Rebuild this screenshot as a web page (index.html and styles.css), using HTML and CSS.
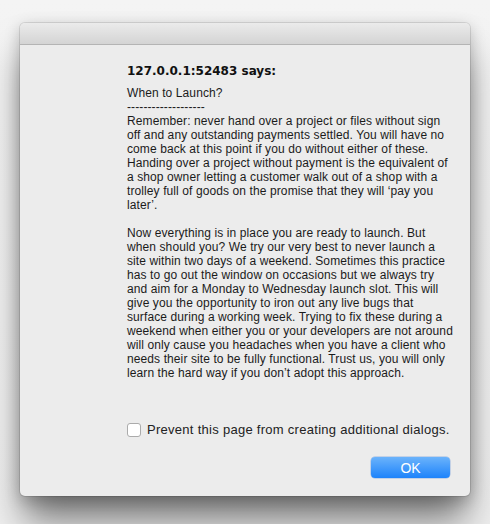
FILE: index.html
```html
<!DOCTYPE html>
<html>
<head>
<meta charset="utf-8">
<link rel="stylesheet" href="styles.css">
</head>
<body>
<div class="dialog">
  <div class="titlebar"></div>
  <div class="content">
    <div class="heading">127.0.0.1:52483 says:</div>
    <div class="message">When to Launch?
-------------------
Remember: never hand over a project or files without sign
off and any outstanding payments settled. You will have no
come back at this point if you do without either of these.
Handing over a project without payment is the equivalent of
a shop owner letting a customer walk out of a shop with a
trolley full of goods on the promise that they will ‘pay you
later’.

Now everything is in place you are ready to launch. But
when should you? We try our very best to never launch a
site within two days of a weekend. Sometimes this practice
has to go out the window on occasions but we always try
and aim for a Monday to Wednesday launch slot. This will
give you the opportunity to iron out any live bugs that
surface during a working week. Trying to fix these during a
weekend when either you or your developers are not around
will only cause you headaches when you have a client who
needs their site to be fully functional. Trust us, you will only
learn the hard way if you don’t adopt this approach.</div>
    <label class="prevent"><span class="box"></span><span class="prevent-text">Prevent this page from creating additional dialogs.</span></label>
    <div class="actions"><button class="ok">OK</button></div>
  </div>
</div>
</body>
</html>
```
FILE: styles.css
```css
html, body {
  margin: 0;
  padding: 0;
}
body {
  width: 490px;
  height: 524px;
  overflow: hidden;
  background: linear-gradient(#f4f4f4, #efefef);
  font-family: "Liberation Sans", Arial, sans-serif;
  color: #1b1b1b;
}
.dialog {
  margin: 23px 0 0 20px;
  width: 450px;
  height: 473px;
  background: #ececec;
  border-radius: 5px;
  box-shadow: 0 0 0 1px rgba(0,0,0,0.1), 0 28px 36px -4px rgba(0,0,0,0.5), 0 4px 16px rgba(0,0,0,0.22);
  display: flex;
  flex-direction: column;
  overflow: hidden;
}
.titlebar {
  height: 21px;
  flex: none;
  background: linear-gradient(#ebebeb, #d4d4d4);
  border-bottom: 1px solid #b4b4b4;
}
.content {
  flex: 1;
  display: flex;
  flex-direction: column;
  padding: 18px 20px 0 107px;
}
.heading {
  font-family: "DejaVu Sans", sans-serif;
  font-weight: bold;
  font-size: 12px;
  line-height: 16px;
  color: #111;
}
.message {
  margin-top: 7px;
  font-size: 12px;
  line-height: 14px;
  letter-spacing: 0.1px;
  white-space: pre;
}
.prevent {
  margin-top: 42px;
  display: flex;
  align-items: center;
  gap: 6px;
  font-size: 13px;
  line-height: 16px;
  letter-spacing: 0.28px;
  color: #222;
}
.prevent-text {
  white-space: nowrap;
}
.box {
  width: 12px;
  height: 12px;
  border: 1px solid #ababab;
  border-radius: 3px;
  background: #fff;
  flex: none;
}
.actions {
  margin-top: 19px;
  display: flex;
  justify-content: flex-end;
}
.ok {
  width: 79px;
  height: 21px;
  border: none;
  border-radius: 4px;
  background: linear-gradient(#6bb3fb, #1d83fb);
  box-shadow: 0 0 0 0.5px rgba(0,80,200,0.35);
  color: #fff;
  font-family: "Liberation Sans", Arial, sans-serif;
  font-size: 14px;
  padding: 0;
}
```
